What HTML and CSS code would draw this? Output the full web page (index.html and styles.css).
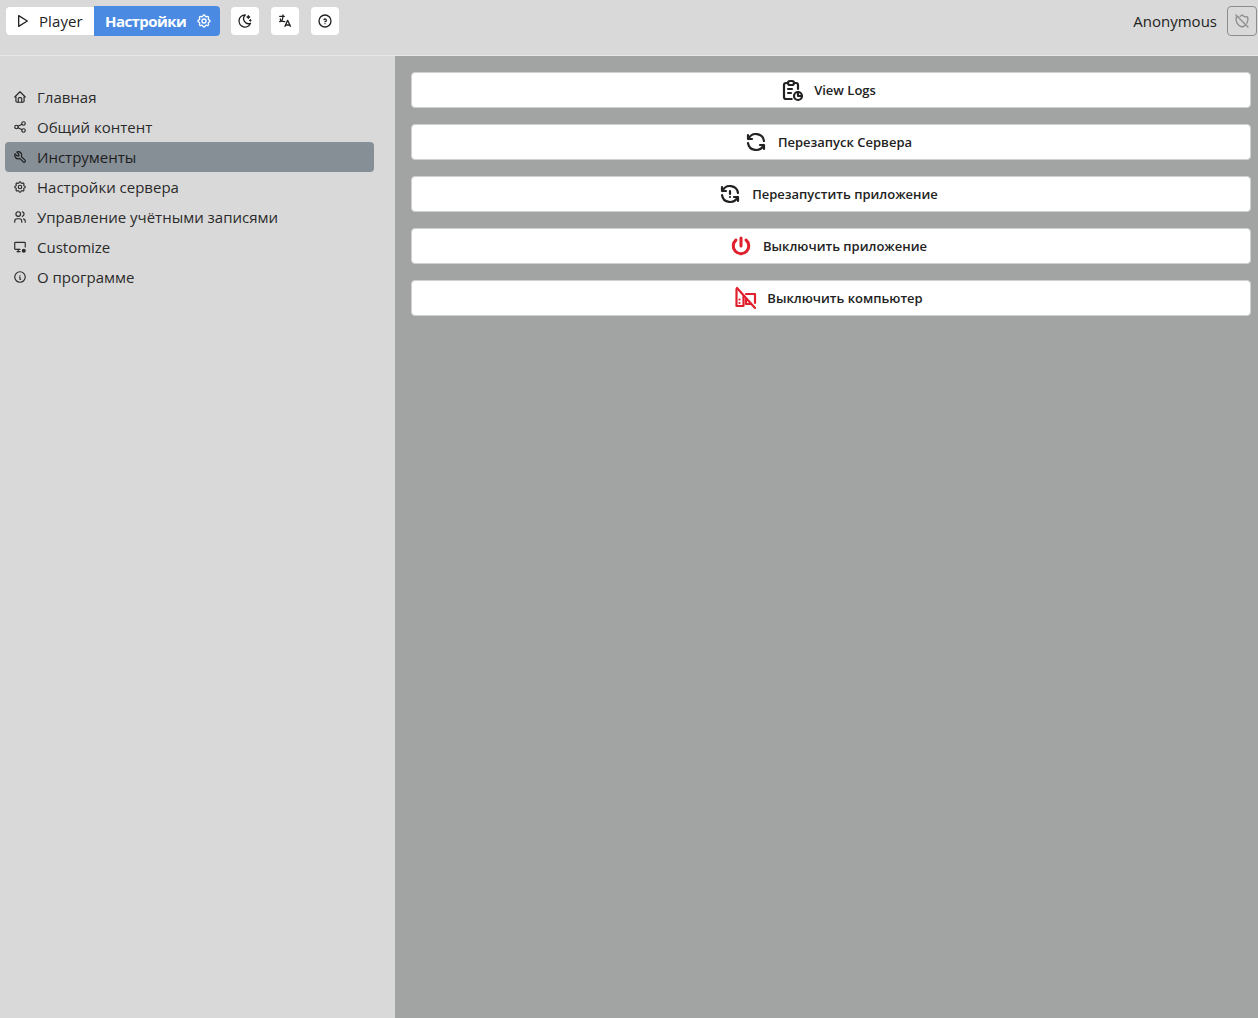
FILE: index.html
```html
<!DOCTYPE html>
<html lang="ru">
<head>
<meta charset="utf-8">
<title>Настройки</title>
<link rel="stylesheet" href="styles.css">
</head>
<body>
<header class="topbar">
  <div class="seg">
    <a class="seg-btn seg-player">
      <svg class="ic ic16" viewBox="0 0 24 24"><path d="M7 4v16l13-8z"/></svg>
      <span>Player</span>
    </a>
    <a class="seg-btn seg-active">
      <span>Настройки</span>
      <svg class="ic ic16" viewBox="0 0 24 24"><path d="M10.325 4.317c.426-1.756 2.924-1.756 3.35 0a1.724 1.724 0 0 0 2.573 1.066c1.543-.94 3.31.826 2.37 2.37a1.724 1.724 0 0 0 1.065 2.572c1.756.426 1.756 2.924 0 3.35a1.724 1.724 0 0 0-1.066 2.573c.94 1.543-.826 3.31-2.37 2.37a1.724 1.724 0 0 0-2.572 1.065c-.426 1.756-2.924 1.756-3.35 0a1.724 1.724 0 0 0-2.573-1.066c-1.543.94-3.31-.826-2.37-2.37a1.724 1.724 0 0 0-1.065-2.572c-1.756-.426-1.756-2.924 0-3.35a1.724 1.724 0 0 0 1.066-2.573c-.94-1.543.826-3.31 2.37-2.37 1 .608 2.296.07 2.572-1.065z"/><path d="M9 12a3 3 0 1 0 6 0a3 3 0 0 0-6 0"/></svg>
    </a>
  </div>
  <button class="icon-btn"><svg class="ic ic16" viewBox="0 0 24 24"><path d="M12 3c.132 0 .263 0 .393 0a7.5 7.5 0 0 0 7.92 12.446a9 9 0 1 1-8.313-12.454z"/><path d="M17 4a2 2 0 0 0 2 2a2 2 0 0 0-2 2a2 2 0 0 0-2-2a2 2 0 0 0 2-2"/><path d="M19 11h2m-1-1v2"/></svg></button>
  <button class="icon-btn"><svg class="ic ic16" viewBox="0 0 24 24"><path d="M4 5h7"/><path d="M9 3v2c0 4.418-2.239 8-5 8"/><path d="M5 9c0 2.144 2.952 3.908 6.7 4"/><path d="M12 20l4-9l4 9"/><path d="M19.1 18h-6.2"/></svg></button>
  <button class="icon-btn"><svg class="ic ic16" viewBox="0 0 24 24"><path d="M3 12a9 9 0 1 0 18 0a9 9 0 1 0-18 0"/><path d="M12 16v.01"/><path d="M12 13a2 2 0 0 0 .914-3.782a1.98 1.98 0 0 0-2.414.483"/></svg></button>
  <span class="user">Anonymous</span>
  <button class="shield-btn"><svg class="ic ic16" viewBox="0 0 24 24"><path d="M17.67 17.667a12 12 0 0 1-5.67 3.333a12 12 0 0 1-8.5-15c.794.036 1.583-.006 2.357-.124m3.128-.926a11.997 11.997 0 0 0 3.015-1.95a12 12 0 0 0 8.5 3a12 12 0 0 1-1.116 9.376"/><path d="M3 3l18 18"/></svg></button>
</header>
<div class="layout">
  <nav class="sidebar">
    <a class="nav-item"><svg class="ic nav-ic" viewBox="0 0 24 24"><path d="M5 12H3l9-9l9 9h-2"/><path d="M5 12v7a2 2 0 0 0 2 2h10a2 2 0 0 0 2-2v-7"/><path d="M9 21v-6a2 2 0 0 1 2-2h2a2 2 0 0 1 2 2v6"/></svg><span>Главная</span></a>
    <a class="nav-item"><svg class="ic nav-ic" viewBox="0 0 24 24"><path d="M3 12a3 3 0 1 0 6 0a3 3 0 0 0-6 0"/><path d="M15 6a3 3 0 1 0 6 0a3 3 0 0 0-6 0"/><path d="M15 18a3 3 0 1 0 6 0a3 3 0 0 0-6 0"/><path d="M8.7 10.7l6.6-3.4"/><path d="M8.7 13.3l6.6 3.4"/></svg><span>Общий контент</span></a>
    <a class="nav-item nav-active"><svg class="ic nav-ic" viewBox="0 0 24 24"><path d="M7 10h3v-3l-3.5-3.5a6 6 0 0 1 8 8l6 6a2 2 0 0 1-3 3l-6-6a6 6 0 0 1-8-8l3.5 3.5"/></svg><span>Инструменты</span></a>
    <a class="nav-item"><svg class="ic nav-ic" viewBox="0 0 24 24"><path d="M10.325 4.317c.426-1.756 2.924-1.756 3.35 0a1.724 1.724 0 0 0 2.573 1.066c1.543-.94 3.31.826 2.37 2.37a1.724 1.724 0 0 0 1.065 2.572c1.756.426 1.756 2.924 0 3.35a1.724 1.724 0 0 0-1.066 2.573c.94 1.543-.826 3.31-2.37 2.37a1.724 1.724 0 0 0-2.572 1.065c-.426 1.756-2.924 1.756-3.35 0a1.724 1.724 0 0 0-2.573-1.066c-1.543.94-3.31-.826-2.37-2.37a1.724 1.724 0 0 0-1.065-2.572c-1.756-.426-1.756-2.924 0-3.35a1.724 1.724 0 0 0 1.066-2.573c-.94-1.543.826-3.31 2.37-2.37 1 .608 2.296.07 2.572-1.065z"/><path d="M9 12a3 3 0 1 0 6 0a3 3 0 0 0-6 0"/></svg><span>Настройки сервера</span></a>
    <a class="nav-item"><svg class="ic nav-ic" viewBox="0 0 24 24"><path d="M5 7a4 4 0 1 0 8 0a4 4 0 1 0-8 0"/><path d="M3 21v-2a4 4 0 0 1 4-4h4a4 4 0 0 1 4 4v2"/><path d="M16 3.13a4 4 0 0 1 0 7.75"/><path d="M21 21v-2a4 4 0 0 0-3-3.85"/></svg><span>Управление учётными записями</span></a>
    <a class="nav-item"><svg class="ic nav-ic" viewBox="0 0 24 24"><path d="M12 16H4a1 1 0 0 1-1-1V5a1 1 0 0 1 1-1h16a1 1 0 0 1 1 1v7"/><path d="M7 20h5"/><path d="M9 16v4"/><circle class="ic-fill" cx="18.5" cy="18.5" r="3.5"/></svg><span>Customize</span></a>
    <a class="nav-item"><svg class="ic nav-ic" viewBox="0 0 24 24"><path d="M3 12a9 9 0 1 0 18 0a9 9 0 0 0-18 0"/><path d="M12 9h.01"/><path d="M11 12h1v4h1"/></svg><span>О программе</span></a>
  </nav>
  <main class="content">
    <button class="action"><svg class="ic ic24" viewBox="0 0 24 24"><path d="M8 5H6a2 2 0 0 0-2 2v12a2 2 0 0 0 2 2h5.697"/><path d="M18 14v4h4"/><path d="M18 11V7a2 2 0 0 0-2-2h-2"/><path d="M8 5a2 2 0 0 1 2-2h2a2 2 0 0 1 2 2a2 2 0 0 1-2 2h-2a2 2 0 0 1-2-2z"/><path d="M14 18a4 4 0 1 0 8 0a4 4 0 1 0-8 0"/><path d="M8 11h4"/><path d="M8 15h3"/></svg><span>View Logs</span></button>
    <button class="action"><svg class="ic ic24" viewBox="0 0 24 24"><path d="M20 11a8.1 8.1 0 0 0-15.5-2m-.5-4v4h4"/><path d="M4 13a8.1 8.1 0 0 0 15.5 2m.5 4v-4h-4"/></svg><span>Перезапуск Сервера</span></button>
    <button class="action"><svg class="ic ic24" viewBox="0 0 24 24"><path d="M20 11a8.1 8.1 0 0 0-15.5-2m-.5-4v4h4"/><path d="M4 13a8.1 8.1 0 0 0 15.5 2m.5 4v-4h-4"/><path d="M12 9v3"/><path d="M12 15v.01"/></svg><span>Перезапустить приложение</span></button>
    <button class="action danger"><svg class="ic ic24" viewBox="0 0 24 24"><path d="M7 6a7.75 7.75 0 1 0 10 0"/><path d="M12 4v8"/></svg><span>Выключить приложение</span></button>
    <button class="action danger"><svg class="ic ic24 ic-pc" viewBox="0 0 24 24"><path d="M4 2l18 20"/><path d="M3.500 3v17h7V10"/><path d="M6.500 13.500v.01"/><path d="M6.500 17v.01"/><path d="M13 8h9v9"/><path d="M18 18h-5v-5"/></svg><span>Выключить компьютер</span></button>
  </main>
</div>
</body>
</html>
```
FILE: styles.css
```css
* { box-sizing: border-box; }
html, body { height: 100%; }
body {
  margin: 0;
  overflow: hidden;
  font-family: "Open Sans", "Noto Sans", sans-serif;
  color: #222;
  background: #d9d9d9;
  display: flex;
  flex-direction: column;
}
.ic {
  fill: none;
  stroke: currentColor;
  stroke-width: 2;
  stroke-linecap: round;
  stroke-linejoin: round;
  flex: none;
  display: block;
}
.ic-fill { fill: currentColor; stroke: none; }
.ic16 { width: 16px; height: 16px; }
.ic24 { width: 24px; height: 24px; stroke-width: 2.2; }

.topbar {
  height: 56px;
  flex: none;
  display: flex;
  align-items: flex-start;
  padding: 6px 1px 0 6px;
  border-bottom: 1px solid #e6e6e6;
  background: #d9d9d9;
}
.seg { display: flex; align-items: center; height: 30px; }
.seg-btn {
  display: flex;
  align-items: center;
  font-size: 15px;
  font-weight: 400;
}
.seg-player {
  width: 88px;
  height: 28px;
  padding-left: 8px;
  gap: 9px;
  background: #fff;
  border-radius: 4px 0 0 4px;
  letter-spacing: .1px;
}
.seg-active {
  width: 126px;
  height: 30px;
  padding-left: 11px;
  gap: 10px;
  background: #4a8ae3;
  color: #fff;
  font-weight: 700;
  letter-spacing: -.55px;
  border-radius: 0 4px 4px 0;
}
.icon-btn {
  width: 28px;
  height: 28px;
  margin: 1px 0 0 12px;
  padding: 0;
  border: 0;
  border-radius: 4px;
  background: #fff;
  color: #222;
  display: flex;
  align-items: center;
  justify-content: center;
}
.seg + .icon-btn { margin-left: 11px; }
.user {
  margin-left: auto;
  font-size: 15px;
  line-height: 30px;
}
.shield-btn {
  width: 30px;
  height: 30px;
  margin-left: 10px;
  padding: 0;
  background: transparent;
  border: 1px solid #8d8d8d;
  border-radius: 4px;
  color: #8d8d8d;
  display: flex;
  align-items: center;
  justify-content: center;
}

.layout { flex: 1; display: flex; min-height: 0; }
.sidebar {
  width: 395px;
  flex: none;
  padding: 26px 21px 0 5px;
  background: #d9d9d9;
}
.nav-item {
  height: 30px;
  display: flex;
  align-items: center;
  padding-left: 8px;
  gap: 10px;
  font-size: 15px;
  color: #2b2b2b;
  border-radius: 4px;
}
.nav-active { background: #868e96; color: #1d1d1d; }
.nav-ic { width: 14px; height: 14px; stroke-width: 2; }

.content {
  flex: 1;
  background: #a2a4a3;
  padding: 16px 7px 0 16px;
  display: flex;
  flex-direction: column;
  gap: 16px;
}
.action {
  height: 36px;
  flex: none;
  display: flex;
  align-items: center;
  justify-content: center;
  gap: 10px;
  background: #fff;
  border: 1px solid #d0d0d0;
  border-radius: 4px;
  font-family: inherit;
  font-size: 13px;
  font-weight: 600;
  color: #222;
  padding: 0 6px 0 0;
}
.danger .ic { color: #e0202c; stroke-width: 3; }
.danger .ic-pc { stroke-width: 2.2; }
```
